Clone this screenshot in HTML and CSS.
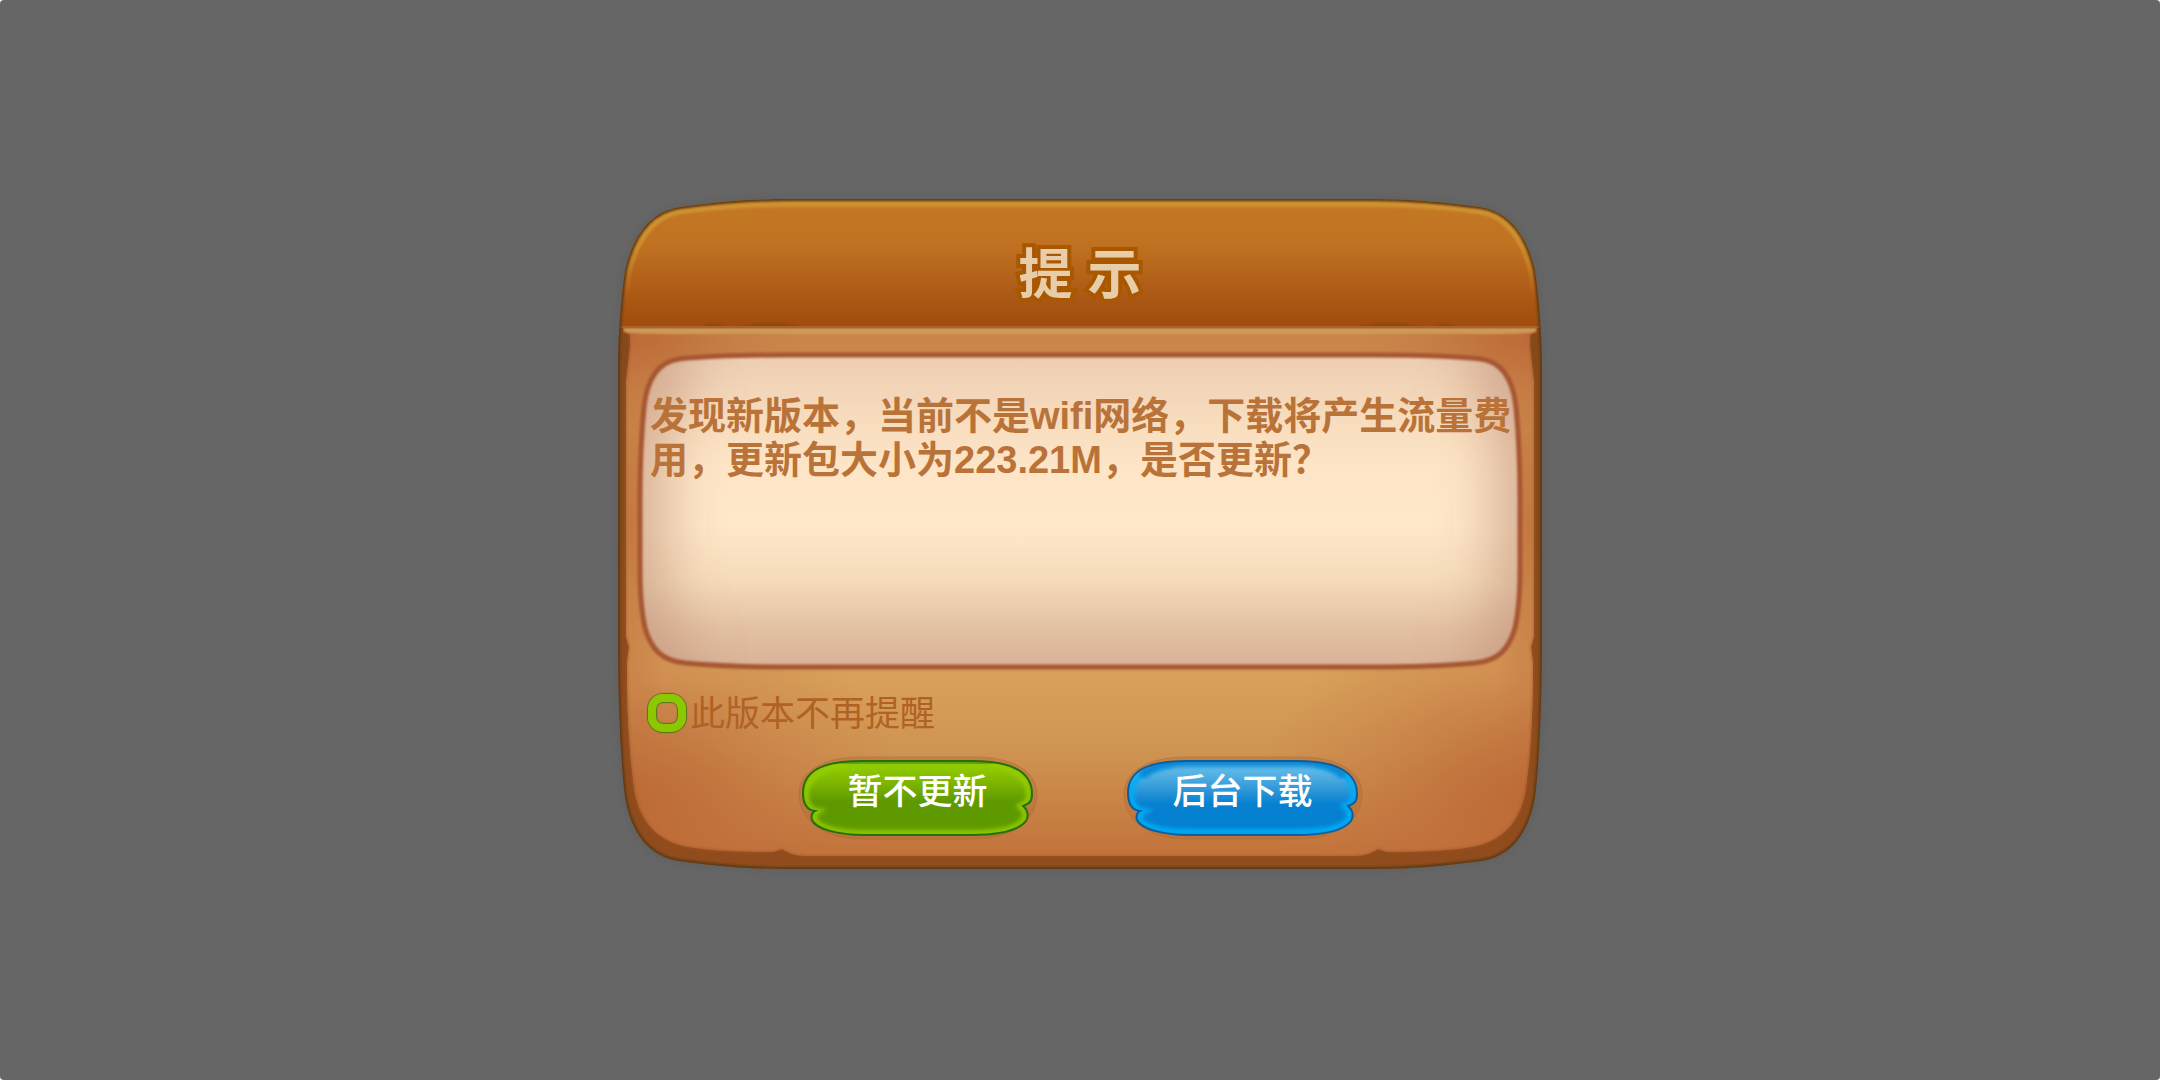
FILE: index.html
```html
<!DOCTYPE html>
<html lang="zh-CN">
<head>
    <meta charset="UTF-8">
    <meta name="viewport" content="width=device-width, initial-scale=1.0">
    <title>提示</title>
    <link rel="stylesheet" href="styles.css">
</head>
<body>
    <main class="dialog" role="dialog" aria-labelledby="dialogTitle">
        <!-- Wooden board -->
        <svg class="board" viewBox="0 0 926 672" preserveAspectRatio="none" aria-hidden="true">
            <defs>
                <linearGradient id="headerFill" x1="0" y1="0" x2="0" y2="130" gradientUnits="userSpaceOnUse">
                    <stop offset="0" stop-color="#c47924"/>
                    <stop offset=".35" stop-color="#c07222"/>
                    <stop offset=".9" stop-color="#a55010"/>
                    <stop offset="1" stop-color="#a04c0e"/>
                </linearGradient>
                <linearGradient id="rimFill" x1="0" y1="0" x2="0" y2="672" gradientUnits="userSpaceOnUse">
                    <stop offset="0" stop-color="#84471a"/>
                    <stop offset="1" stop-color="#914c1d"/>
                </linearGradient>
                <linearGradient id="faceFill" x1="0" y1="130" x2="0" y2="660" gradientUnits="userSpaceOnUse">
                    <stop offset="0" stop-color="#c8854a"/>
                    <stop offset=".2" stop-color="#d09050"/>
                    <stop offset=".66" stop-color="#d8a05a"/>
                    <stop offset=".8" stop-color="#cf9351"/>
                    <stop offset="1" stop-color="#c2723a"/>
                </linearGradient>
                <radialGradient id="cornerShade">
                    <stop offset="0" stop-color="#bb6635" stop-opacity=".9"/>
                    <stop offset=".3" stop-color="#bd6a37" stop-opacity=".65"/>
                    <stop offset=".65" stop-color="#c17040" stop-opacity=".28"/>
                    <stop offset="1" stop-color="#c17040" stop-opacity="0"/>
                </radialGradient>
                <linearGradient id="paperFill" x1="0" y1="156" x2="0" y2="469" gradientUnits="userSpaceOnUse">
                    <stop offset="0" stop-color="#edcdb2"/>
                    <stop offset=".18" stop-color="#f6dabc"/>
                    <stop offset=".36" stop-color="#fee5c7"/>
                    <stop offset=".55" stop-color="#ffe7c9"/>
                    <stop offset=".72" stop-color="#f5dbbb"/>
                    <stop offset=".88" stop-color="#e3c0a3"/>
                    <stop offset="1" stop-color="#d9b298"/>
                </linearGradient>
                <linearGradient id="shineFade" x1="0" y1="0" x2="0" y2="100" gradientUnits="userSpaceOnUse">
                    <stop offset="0" stop-color="#cf9130"/>
                    <stop offset=".4" stop-color="#cf9130"/>
                    <stop offset="1" stop-color="#cf9130" stop-opacity="0"/>
                </linearGradient>
                <filter id="soften" x="-5%" y="-5%" width="110%" height="110%">
                    <feGaussianBlur stdDeviation="1"/>
                </filter>
                <filter id="paperBlur" filterUnits="userSpaceOnUse" x="-100" y="50" width="1126" height="520">
                    <feGaussianBlur stdDeviation="28"/>
                </filter>
                <filter id="boardShadow" x="-5%" y="-5%" width="110%" height="110%">
                    <feGaussianBlur stdDeviation="5"/>
                </filter>
                <path id="boardShape" d="M170 1C130 1 100 4 63 9C36 13 17 34 8 72C4 100 1 140 1 170V440C1 490 3 560 8 599C14 636 33 659 62 663C98 668 130 671 170 671H756C796 671 828 668 864 663C893 659 912 636 918 599C923 560 925 490 925 440V170C925 140 922 100 918 72C909 34 890 13 863 9C826 4 796 1 756 1Z"/>
                <path id="faceShape" d="M6 131H920L913 137V150L917 185V438L914 449L916 465C916 500 915 550 908 595C902 625 885 641 863 647C840 653 800 654 770 654L761 651C755 655 748 658 736 658H190C178 658 171 655 165 651L156 654C126 654 86 653 63 647C41 641 24 625 18 595C11 550 10 500 10 465L12 449L9 438V185L13 150V137Z"/>
                <path id="paperShape" d="M170 157C125 157 90 158 62 161C40 164 30 182 27 209C24 240 23 265 23 300V370C23 395 24 412 28 430C34 451 45 463 68 465C100 468 130 469 170 469H756C796 469 826 468 858 465C881 463 892 451 898 430C902 412 903 395 903 370V300C903 265 902 240 899 209C896 182 886 164 864 161C836 158 801 157 756 157Z"/>
                <clipPath id="boardClip"><use href="#boardShape"/></clipPath>
                <clipPath id="faceClip"><use href="#faceShape"/></clipPath>
                <clipPath id="paperClip"><use href="#paperShape"/></clipPath>
                <clipPath id="headerClip"><path d="M0 0H926V130H0Z"/></clipPath>
            </defs>
            <use href="#boardShape" fill="#4d4d4d" opacity=".35" filter="url(#boardShadow)"/>
            <use href="#boardShape" fill="url(#rimFill)"/>

            <use href="#faceShape" fill="url(#faceFill)"/>
            <g clip-path="url(#faceClip)" fill="url(#cornerShade)">
                <ellipse cx="13" cy="140" rx="170" ry="90"/>
                <ellipse cx="913" cy="140" rx="170" ry="90"/>
                <ellipse cx="14" cy="330" rx="40" ry="280" opacity=".7"/>
                <ellipse cx="912" cy="330" rx="40" ry="280" opacity=".7"/>
                <ellipse cx="10" cy="600" rx="270" ry="210"/>
                <ellipse cx="916" cy="600" rx="270" ry="210"/>
            </g>
            <use href="#faceShape" fill="none" stroke="#a05a28" stroke-width="2" opacity=".6" filter="url(#soften)"/>

            <g clip-path="url(#boardClip)">
                <path fill="url(#headerFill)" d="M0 0H926V130H0Z"/>
                <g clip-path="url(#headerClip)">
                    <path d="M7 125C8 98 9 84 12 72C21 38 38 17 64 13C100 8 130 6 170 6H756C796 6 826 8 862 13C888 17 905 38 914 72C917 84 918 98 919 125" fill="none" stroke="url(#shineFade)" stroke-width="6" filter="url(#soften)"/>
                </g>
                <path d="M85 129C92 125 102 125 108 129ZM120 129C145 123 165 124 185 129ZM741 129C761 124 781 123 806 129ZM818 129C824 125 834 125 841 129Z" fill="#7f430f" opacity=".6" filter="url(#soften)"/>
                <path d="M7 130H919V134C890 138 830 135 756 136H170C96 135 36 138 7 134Z" fill="#d09a56" filter="url(#soften)"/>
                <path d="M3 129H923" stroke="#a8642c" stroke-width="2"/>
                <use href="#boardShape" fill="none" stroke="#5c3a12" stroke-width="4" filter="url(#soften)"/>
            </g>

            <use href="#paperShape" fill="url(#paperFill)"/>
            <g clip-path="url(#paperClip)">
                <path d="M70 155C40 160 18 180 12 220V420C18 455 40 470 70 475M856 155C886 160 908 180 914 220V420C908 455 886 470 856 475" fill="none" stroke="#c3947b" stroke-width="70" opacity=".7" filter="url(#paperBlur)"/>
            </g>
            <use href="#paperShape" fill="none" stroke="#a65630" stroke-width="5" filter="url(#soften)"/>
        </svg>

        <header class="dialog-header">
            <h1 id="dialogTitle">提 示</h1>
        </header>

        <section class="message">
            <p>发现新版本，当前不是wifi网络，下载将产生流量费用，更新包大小为223.21M，是否更新？</p>
        </section>

        <div class="remind">
            <input type="checkbox" id="noRemind">
            <label for="noRemind">此版本不再提醒</label>
        </div>

        <div class="actions">
            <button type="button" class="btn btn-green">
                <svg class="btn-art" viewBox="0 0 231 76" preserveAspectRatio="none" aria-hidden="true">
                    <defs>
                        <linearGradient id="greenFill" x1="0" y1="0" x2="0" y2="1">
                            <stop offset=".08" stop-color="#90ca00"/>
                            <stop offset=".3" stop-color="#7db500"/>
                            <stop offset=".55" stop-color="#5f9900"/>
                            <stop offset="1" stop-color="#5f9900"/>
                        </linearGradient>
                        <path id="btnShape" d="M60 1H170C205 1 230 9 230 34C230 42 227 44 221 46C226 50 227 56 224 61C217 70 198 75 170 75H62C36 75 14 69 10 60C9 56 9 53 13 51C5 50 1 43 1 33C1 8 26 1 60 1Z"/>
                        <clipPath id="btnClip"><use href="#btnShape"/></clipPath>
                        <filter id="glow" x="-10%" y="-20%" width="120%" height="140%">
                            <feGaussianBlur stdDeviation="2"/>
                        </filter>
                    </defs>
                    <path class="btn-ring" d="M58 -3H174C208 -3 235 10 235 34C235 62 208 79 172 79H60C24 79 -3 62 -3 34C-3 10 24 -3 58 -3Z"/>
                    <use href="#btnShape" fill="url(#greenFill)"/>
                    <g clip-path="url(#btnClip)">
                        <path d="M62 73C30 73 12 65 12 57C12 54 14 52 16 51C7 50 4 42 4 34C4 18 22 7 45 4M188 4C210 7 227 18 227 34C227 41 224 44 218 46C224 51 224 56 221 61C212 69 198 73 170 73H62" fill="none" stroke="#95cf00" stroke-width="5" filter="url(#glow)"/>
                        <path d="M40 3C60 1 172 1 192 3" fill="none" stroke="#5f9f08" stroke-width="8" filter="url(#glow)"/>
                    </g>
                    <use href="#btnShape" fill="none" stroke="#25700c" stroke-width="2"/>
                </svg>
                <span>暂不更新</span>
            </button>
            <button type="button" class="btn btn-blue">
                <svg class="btn-art" viewBox="0 0 231 76" preserveAspectRatio="none" aria-hidden="true">
                    <defs>
                        <linearGradient id="blueFill" x1="0" y1="0" x2="0" y2="1">
                            <stop offset=".1" stop-color="#62bbe8"/>
                            <stop offset=".3" stop-color="#40a2dc"/>
                            <stop offset=".58" stop-color="#0681d0"/>
                            <stop offset="1" stop-color="#037fd0"/>
                        </linearGradient>
                    </defs>
                    <path class="btn-ring" d="M58 -3H174C208 -3 235 10 235 34C235 62 208 79 172 79H60C24 79 -3 62 -3 34C-3 10 24 -3 58 -3Z"/>
                    <use href="#btnShape" fill="url(#blueFill)"/>
                    <g clip-path="url(#btnClip)">
                        <path d="M62 72C30 72 12 65 12 57C12 54 14 52 16 51C7 50 4 42 4 34C4 18 22 7 45 4M188 4C210 7 227 18 227 34C227 41 224 44 218 46C224 51 224 56 221 61C212 69 198 72 170 72H62" fill="none" stroke="#00adf5" stroke-width="6" filter="url(#glow)"/>
                        <path d="M14 16C28 3 45 2 60 2H172C190 2 206 4 218 16" fill="none" stroke="#0c86d4" stroke-width="9" filter="url(#glow)"/>
                    </g>
                    <use href="#btnShape" fill="none" stroke="#0d5f9c" stroke-width="2"/>
                </svg>
                <span>后台下载</span>
            </button>
        </div>
    </main>
</body>
</html>
```
FILE: styles.css
```css
:root {
    --backdrop: #666666;
    --title: #e8cdab;
    --title-outline: #a95800;
    --message: #b97339;
    --label: #b06225;
}

* {
    box-sizing: border-box;
}

html {
    background: white;
}

body {
    margin: 0;
    min-height: 100vh;
    padding: 24px 24px 36px;
    display: flex;
    align-items: center;
    justify-content: center;
    background: var(--backdrop);
    border-radius: 4px;
    font-family: "Liberation Sans", "Noto Sans CJK SC", sans-serif;
}

.dialog {
    position: relative;
    isolation: isolate;
    width: 100%;
    max-width: 926px;
    padding: 0 22px 34px;
}

.board {
    position: absolute;
    inset: 0;
    z-index: -1;
    width: 100%;
    height: 100%;
    overflow: visible;
}

.dialog-header {
    height: 154px;
    padding-top: 41px;
}

.dialog-header h1 {
    margin: 0;
    font-size: 54px;
    line-height: 72px;
    font-weight: 700;
    text-align: center;
    color: var(--title);
    -webkit-text-stroke: 8px var(--title-outline);
    paint-order: stroke fill;
}

.message {
    min-height: 318px;
    padding: 42px 0 42px 11px;
}

.message p {
    margin: 0;
    font-size: 38px;
    line-height: 44px;
    font-weight: 700;
    color: var(--message);
}

.remind {
    display: flex;
    align-items: center;
    gap: 4px;
    height: 40px;
    margin: 23px 0 27px;
    padding-left: 9px;
}

.remind input {
    appearance: none;
    width: 38px;
    height: 38px;
    margin: 0;
    border: 8px solid #8cc800;
    border-radius: 15px;
    box-shadow: 0 0 1px 1px #55751a, inset 0 0 1px 1px #55751a;
    cursor: pointer;
}

.remind input:checked {
    background: #8cc800;
}

.remind label {
    font-size: 35px;
    line-height: 40px;
    padding-top: 2px;
    color: var(--label);
    cursor: pointer;
}

.actions {
    display: flex;
    justify-content: center;
    gap: 94px;
}

.btn {
    position: relative;
    isolation: isolate;
    width: 231px;
    height: 76px;
    padding: 0 0 12px;
    border: 0;
    background: none;
    font-family: inherit;
    font-size: 35px;
    line-height: 40px;
    font-weight: 500;
    color: white;
    cursor: pointer;
}

.btn:hover {
    filter: brightness(1.05);
}

.btn-art {
    position: absolute;
    inset: 0;
    z-index: -1;
    width: 100%;
    height: 100%;
    overflow: visible;
}

.btn-ring {
    fill: #b06a34;
    fill-opacity: .35;
    stroke: #a8632e;
    stroke-opacity: .4;
    stroke-width: 1;
}
```
